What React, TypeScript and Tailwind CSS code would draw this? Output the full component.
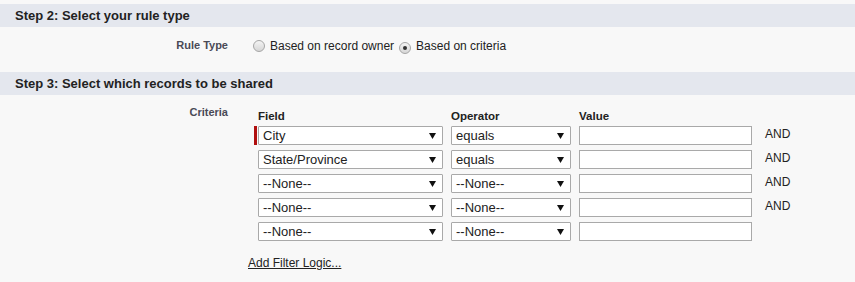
const rows = [
  { field: 'City', op: 'equals', and: true, required: true },
  { field: 'State/Province', op: 'equals', and: true, required: false },
  { field: '--None--', op: '--None--', and: true, required: false },
  { field: '--None--', op: '--None--', and: true, required: false },
  { field: '--None--', op: '--None--', and: false, required: false },
];

function Arrow() {
  return (
    <svg width="7" height="6" viewBox="0 0 7 6" className="shrink-0">
      <polygon points="0,0 7,0 3.5,6" fill="#111" />
    </svg>
  );
}

function FakeSelect({ value, width }: { value: string; width: string }) {
  return (
    <div
      className={`${width} h-[19px] flex items-center justify-between bg-white border border-[#a9a9a9] rounded-[1px] pl-[4px] pr-[6px] text-[13px] text-[#222] leading-none`}
    >
      <span>{value}</span>
      <Arrow />
    </div>
  );
}

function Radio({ checked }: { checked?: boolean }) {
  return (
    <span className="inline-flex items-center justify-center w-[12px] h-[12px] rounded-full border border-[#a6a6a6] bg-linear-to-b from-[#f4f4f4] to-[#d6d6d6] shrink-0">
      {checked && <span className="w-[4px] h-[4px] rounded-full bg-[#333]" />}
    </span>
  );
}

function SectionHeader({ title }: { title: string }) {
  return (
    <div className="h-[23px] bg-[#e4e7ee] flex items-center pl-[15px]">
      <h3 className="text-[13px] font-bold text-[#222]">{title}</h3>
    </div>
  );
}

export default function App() {
  return (
    <div className="w-[855px] h-[282px] bg-[#f8f8f8] pt-[4px] font-['Liberation_Sans',Arial,sans-serif] text-[#222] overflow-hidden">
      <SectionHeader title="Step 2: Select your rule type" />

      {/* Rule type */}
      <div className="h-[45px] flex items-start pt-[9px]">
        <div className="w-[228px] text-right text-[11px] font-bold text-[#4a4a56] pt-[1px]">Rule Type</div>
        <div className="ml-[25px] flex items-center text-[12px] mt-[1px]">
          <Radio />
          <span className="ml-[5px]">Based on record owner</span>
          <span className="ml-[5px]">
            <Radio checked />
          </span>
          <span className="ml-[5px]">Based on criteria</span>
        </div>
      </div>

      <SectionHeader title="Step 3: Select which records to be shared" />

      {/* Criteria */}
      <div className="flex items-start pt-[10px]">
        <div className="w-[228px] text-right text-[11px] font-bold text-[#4a4a56] -mt-[1px]">Criteria</div>
        <div className="ml-[20px]">
          <div className="flex items-end h-[20px] text-[11.5px] font-bold text-[#222]">
            <div className="w-[10px]" />
            <div className="w-[185px]">Field</div>
            <div className="ml-[8px] w-[120px]">Operator</div>
            <div className="ml-[8px] w-[173px]">Value</div>
          </div>
          <div className="mt-[1px] flex flex-col gap-[5px]">
            {rows.map((r, i) => (
              <div key={i} className="flex items-start">
                <div className="w-[10px] h-[19px] flex justify-end pr-[1px]">
                  {r.required && <div className="w-[3px] h-[19px] bg-[#b00f0f]" />}
                </div>
                <FakeSelect value={r.field} width="w-[185px]" />
                <div className="ml-[8px]">
                  <FakeSelect value={r.op} width="w-[120px]" />
                </div>
                <div className="ml-[8px] w-[173px] h-[19px] bg-white border border-[#a9a9a9]" />
                {r.and && <div className="ml-[13px] text-[12px] leading-[14px] mt-[1px]">AND</div>}
              </div>
            ))}
          </div>
          <a href="#" className="block mt-[13px] text-[12px] text-[#222] underline">
            Add Filter Logic...
          </a>
        </div>
      </div>
    </div>
  );
}
